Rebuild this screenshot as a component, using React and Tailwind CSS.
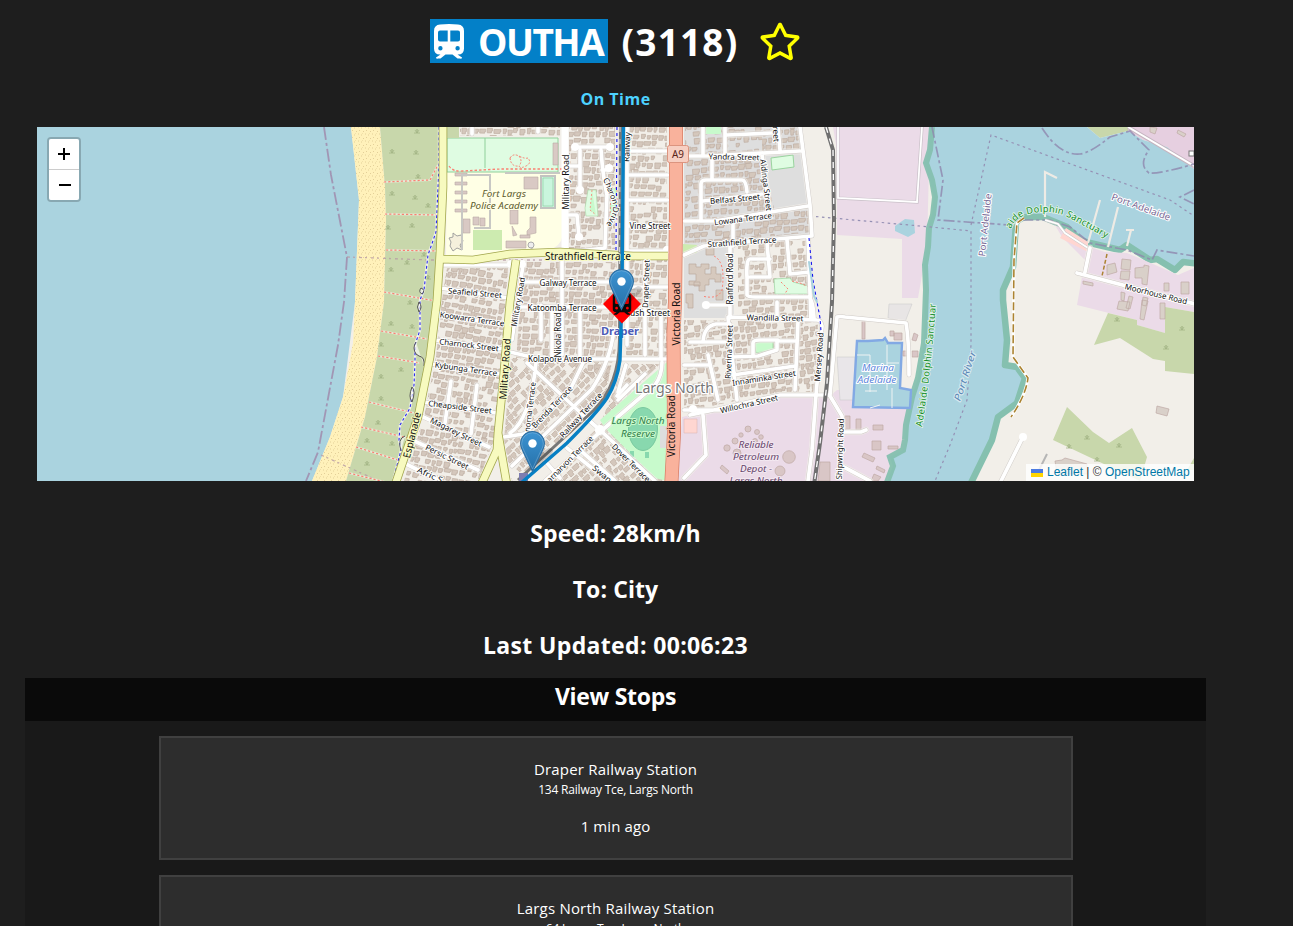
import React from "react";
import { FaRegStar } from "react-icons/fa";

/* ---------- map data (map units are page pixels) ---------- */

const HOUSE_REGIONS = [
  { id: "w", pts: "447,268 508,268 500,370 494,440 478,481 404,481 424,417 436,357 442,300", angle: 9, box: [390, 250, 140, 250] },
  { id: "n", pts: "460,127 560,127 560,136 460,136", angle: 1, box: [455, 122, 110, 24] },
  { id: "c", pts: "569,127 615,127 615,249 569,249", angle: 0, box: [565, 122, 55, 132] },
  { id: "m", pts: "524,262 617,262 617,345 606,385 560,358 516,358", angle: 2, box: [505, 255, 120, 140] },
  { id: "d", pts: "628,127 667,127 667,358 626,358", angle: 1, box: [620, 122, 52, 240] },
  { id: "s", pts: "511,358 612,358 606,395 560,440 530,468 512,481 504,440", angle: -45, box: [460, 330, 170, 170] },
  { id: "t", pts: "624,364 660,364 600,422 664,481 545,481 600,425", angle: -42, box: [520, 340, 170, 160] },
  { id: "e", pts: "685,127 762,127 762,160 775,212 810,208 810,232 735,241 685,243", angle: -4, box: [675, 115, 145, 140] },
  { id: "e2", pts: "762,130 800,127 800,150 762,155", angle: -3, box: [755, 120, 50, 40] },
  { id: "f", pts: "738,245 808,236 814,318 738,314", angle: -3, box: [730, 230, 90, 95] },
  { id: "g", pts: "684,320 818,322 816,392 780,392 720,404 684,412", angle: -7, box: [675, 305, 150, 115] },
];

function seeded(seed) {
  let s = seed;
  return () => {
    s = (s * 16807) % 2147483647;
    return s / 2147483647;
  };
}

function Houses({ region, index }) {
  const [x, y, w, h] = region.box;
  const rnd = seeded(991 + index * 137);
  const cx = x + w / 2;
  const cy = y + h / 2;
  const r = Math.hypot(w, h) / 2;
  const items = [];
  for (let v = -r; v < r; v += 7.2) {
    for (let u = -r; u < r; ) {
      const bw = 3 + rnd() * 4;
      const bh = 3.4 + rnd() * 2.4;
      if (rnd() > 0.1)
        items.push(`M${u.toFixed(1)} ${(v + rnd() * 2.2).toFixed(1)}h${bw.toFixed(1)}v${(bh * 0.6).toFixed(1)}h-1v${(bh * 0.4).toFixed(1)}h-${(bw - 1).toFixed(1)}z`);
      u += bw + 0.8 + rnd() * 1.8;
    }
  }
  return (
    <g clipPath={`url(#clip-${region.id})`}>
      <clipPath id={`clip-${region.id}`}>
        <polygon points={region.pts} />
      </clipPath>
      <path transform={`translate(${cx} ${cy}) rotate(${region.angle})`} d={items.join("")} fill="#d4c7bc" stroke="#bfafa3" strokeWidth="0.7" />
    </g>
  );
}

const STREETS = [
  // west
  "M443 265H510", "M440 288L509 298", "M438 315L507 325", "M435 340L503 349", "M431 364L500 374", "M424 402L496 413", "M421 416L489 447", "M412 440L478 470", "M404 463L440 481",
  "M451 381L445 423", "M477 385L471 434", "M504 437L530 433",
  // military / middle
  "M565 127V250", "M523 265L518 300L512 340", "M525 282H612", "M516 307H612", "M510 352L540 359H667", "M562 256V355", "M541 305V340", "M552 310V357", "M580 310V358",
  "M472 127V134", "M538 127V132",
  // charon drive
  "M575 147H610", "M580 150V190", "M601 150Q603 178 607 195", "M567 166H579", "M567 215H577L579 236", "M602 170H610", "M607 195L605 248L570 252", "M612 222L606 225",
  // draper
  "M627 127V345", "M627 151H668", "M627 175H668", "M627 200H668", "M627 226H668", "M627 251H668", "M645 260V355", "M627 312H668", "M661 312V357", "M627 287H668",
  // diagonal streets
  "M614 330Q610 362 592 389L512 466", "M662 362Q662 376 655 385L600 432L545 481", "M527 363L540 375L584 416L600 430L655 481", "M536 363Q530 420 510 433", "M584 361L570 390L528 430", "M567 448L608 481", "M545 461L560 478", "M627 385L617 396", "M645 374L618 400", "M626 365L618 392", "M580 450L615 481",
  // east north
  "M684 156H708L800 151", "M703 127V155", "M725 127V155", "M727 135L772 133", "M778 127L780 150", "M800 127L810 205L812 236", "M712 160V180", "M701 220V184Q701 180 706 180H742Q746 180 747 192", "M703 201L762 194", "M684 221H715L808 206", "M762 155L770 212", "M733 222V246", "M684 255L704 246L765 240L812 236",
  // ranford etc
  "M730 246V318", "M767 243L770 277H750", "M787 240L790 274L810 272", "M808 238L811 320", "M770 259H750Q746 259 747 278V295Q748 297 755 297H808Q813 297 814 318", "M705 305H728", "M728 317L817 320Q821 320 822 326L816 395", "M777 302V318", "M728 318L732 355L737 400",
  "M690 342H725", "M703 342Q704 326 716 324H730", "M708 355L718 400", "M684 365H708", "M732 357L758 356L777 350V341H796", "M753 355V343Q753 340 760 340H778", "M798 322L795 390", "M733 375L795 366", "M690 415L723 408L780 395H830", "M684 410H720",
  // south east
  "M816 395L812 450L808 481", "M703 415L706 455L684 478", "M830 396L842 416L843 432H861L866 430", "M840 465L870 481", "M830 395L837 317Q840 316 845 317L906 323Q909 340 909 375",
  "M1077 273L1195 304", "M1090 248L1085 272", "M1023 437L1001 481",
];

const YELLOW = ["M443 127V187L440 253L437 300L430 357L418 417L395 485", "M440 259L473 260L510 254L560 252L633 256H668", "M516 260L510 302L503 383L498 433L497 450L481 485", "M498 433L507 485"];

const RIVER = "M930 127L929 150L925 163L930 180L934 197L932 215L928 228L927 247L924 265L925 290L924 343L918 378L912 397L906 425L905 440L903 450L890 457L893 466L886 485H972L992 440L998 417L1017 403L1025 378L1017 367L1005 365L1007 340L1003 300L1003 290L1013 267L1016 223Q1020 217 1028 217L1043 217L1067 227L1080 240L1090 243L1120 250L1127 245L1150 260L1157 259L1175 270L1183 262L1200 264V174L1167 147L1143 140L1128 131L1100 138L1087 127Z";

/* text, x, y, length, rotation, size */
const LABELS = [
  ["Military Road", 566, 182, 55, -90, 9], ["Military Road", 505, 369, 61, -86, 10], ["Military Road", 518, 302, 50, -80, 8],
  ["Esplanade", 412, 435, 47, -76, 10], ["Strathfield Terrace", 588, 256, 86, 0, 10],
  ["Seafield Street", 475, 293, 54, 5, 8], ["Koowarra Terrace", 472, 319, 65, 8, 8], ["Charnock Street", 469, 345, 60, 7, 8], ["Kybunga Terrace", 466, 369, 63, 8, 8], ["Cheapside Street", 460, 407, 64, 7, 8], ["Magarey Street", 456, 432, 56, 26, 8], ["Persic Street", 447, 457, 47, 26, 8], ["Afric S", 430, 475, 27, 24, 8],
  ["Galway Terrace", 568, 283, 57, 0, 8], ["Katoomba Terrace", 562, 308, 69, 0, 8], ["Kolapore Avenue", 560, 359, 64, 0, 8], ["Nikola Road", 558, 335, 45, -90, 8],
  ["norna Terrace", 530, 407, 50, -83, 8], ["Brenda Terrace", 552, 407, 55, -46, 8], ["Railway Terrace", 581, 415, 58, -47, 8], ["arnarvon Terrace", 570, 459, 62, -45, 8], ["Dover Terrace", 631, 463, 50, 45, 8], ["Swan", 602, 474, 22, 40, 8],
  ["Vine Street", 650, 226, 41, 0, 8], ["Draper Street", 646, 284, 48, -88, 8], ["ush Street", 650, 313, 40, 0, 8], ["Railway", 627, 147, 30, -88, 8],
  ["Victoria Road", 676, 314, 63, -90, 10], ["Victoria Road", 671, 426, 62, -90, 10],
  ["Yandra Street", 734, 157, 51, 1, 8], ["Belfast Street", 735, 199, 50, -5, 8], ["Lowana Terrace", 743, 219, 58, -7, 8], ["Strathfield Terrace", 742, 242, 69, -4, 8], ["Aldinga Street", 766, 185, 52, 83, 8], ["reet", 776, 134, 16, 87, 8],
  ["Ranford Road", 730, 279, 51, -90, 8], ["Riverina Street", 729, 352, 54, -88, 8], ["Wandilla Street", 775, 318, 57, 1, 8], ["Innaminka Street", 764, 378, 64, -9, 8], ["Willochra Street", 749, 404, 59, -13, 8], ["Mersey Road", 819, 357, 49, -86, 8], ["Shipwright Road", 840, 449, 61, -88, 8], ["Moorhouse Road", 1156, 294, 64, 14, 8],
];

function Label({ t, x, y, len, rot = 0, size = 8, fill = "#111111", halo = "#ffffff", hw = 2, italic, weight }) {
  return (
    <text
      transform={`translate(${x} ${y}) rotate(${rot})`}
      dy={size * 0.35}
      textAnchor="middle"
      textLength={len}
      lengthAdjust="spacingAndGlyphs"
      fontSize={size}
      fontStyle={italic ? "italic" : undefined}
      fontWeight={weight}
      fill={fill}
      stroke={halo}
      strokeWidth={hw}
      strokeLinejoin="round"
      paintOrder="stroke"
    >
      {t}
    </text>
  );
}

function TrainIcon(props) {
  return (
    <svg viewBox="0 0 30 35" fill="currentColor" {...props}>
      <path
        fillRule="evenodd"
        d="M6 .5Q15-.5 24 .5Q30 1 30 7V24.500Q30 30.500 24 30.500H23.500L28 33.500Q28.200 34.800 26 34.600H23.500L18.500 30.500H11.500L6.500 34.600H4Q1.800 34.800 2 33.500L6.500 30.500H6Q0 30.500 0 24.500V7Q0 1 6 .5ZM6 6.500Q4 6.500 4 8.500V15.500Q4 17.500 6 17.500H13.700V6.500ZM16.300 6.500V17.500H24Q26 17.500 26 15.500V8.500Q26 6.500 24 6.500ZM6.400 22A2.200 2.200 0 1 0 6.400 26.400A2.200 2.200 0 1 0 6.400 22ZM23.600 22A2.200 2.200 0 1 0 23.600 26.400A2.200 2.200 0 1 0 23.600 22Z"
      />
    </svg>
  );
}

function Pin({ x, y }) {
  return (
    <g transform={`translate(${x - 12.5} ${y - 41})`}>
      <path d="M14 40L31 24Q36 18 29 17L20 22Z" fill="#000" opacity="0.16" />
      <path d="M12.5 40.5L3 20.5C1.4 17.4.6 15.4.6 12.5a11.9 11.9 0 0 1 23.8 0c0 2.900-.8 4.900-2.400 8Z" fill="url(#pinFill)" stroke="#2b6ea3" strokeWidth="1.1" />
      <path d="M12.5 37.800L4.200 20C2.600 16.900 1.700 15 1.700 12.500a10.800 10.800 0 0 1 21.600 0c0 2.500-.9 4.400-2.500 7.500Z" fill="none" stroke="#fff" strokeOpacity="0.2" />
      <circle cx="12.5" cy="12.5" r="4.200" fill="#fff" />
    </g>
  );
}

const TUFTS = [[417, 131], [392, 151], [416, 152], [418, 176], [392, 193], [415, 197], [428, 205], [412, 225], [388, 227], [424, 254], [407, 262], [391, 269], [428, 277], [410, 302], [391, 323], [412, 326], [381, 344], [401, 369], [381, 376], [381, 398], [378, 422], [367, 440], [392, 443], [367, 463], [1117, 319], [1182, 328], [1166, 347], [1087, 437], [1119, 445], [1097, 459], [1069, 446]];

const COAST_PATH = "M439 127V165L436 232L428 255L424 290L420 300V330L415 345V362L414 385L410 408L400 425L399 440L401 450L393 481";
const BEACH_TRACKS = "M384 182L430 180L438 165M385 214L437 215M386 250L438 251M384 292L436 301M381 331L427 339M378 356L420 363M369 402L418 414M361 427L408 438M356 447L404 462M349 473L397 485";

function MapDrawing() {
  return (
    <svg viewBox="37 127 1157 354" className="block h-[354px] w-[1157px] font-['Noto_Sans',sans-serif]" aria-hidden="true">
      <defs>
        <linearGradient id="pinFill" x1="0" y1="0" x2="0" y2="1">
          <stop offset="0" stopColor="#3c93d2" />
          <stop offset="1" stopColor="#2570a8" />
        </linearGradient>
        <pattern id="sand" width="7" height="7" patternUnits="userSpaceOnUse">
          <path d="M1 1h1M4 2h1M2 4.500h1M6 5.500h1M5 0h1" stroke="#dcc78f" strokeWidth="0.8" />
        </pattern>
      </defs>
      <rect x="37" y="127" width="1157" height="354" fill="#f2efe9" />

      {/* gulf, beach and dunes */}
      <path d="M37 127H351L359 200L355 302L343 397L330 437L312 481H37Z" fill="#aad3df" />
      <path d="M351 127H380L385 187L386 220L384 302L377 357L365 417L346 481H312L330 437L343 397L353 343L355 302L359 200Z" fill="#fff1ba" />
      <path d="M351 127H380L385 187L386 220L384 302L377 357L365 417L346 481H312L330 437L343 397L353 343L355 302L359 200Z" fill="url(#sand)" />
      <path d="M380 127H443V187L440 253L437 300L430 357L418 417L397 481H346L365 417L377 357L384 302L386 220L385 187Z" fill="#c8d7ab" />
      <path d="M324 127L331 175L347 257L344 302L338 345L318 452L306 481" fill="none" stroke="#a08bad" strokeWidth="1.8" strokeDasharray="13 3 3 3" opacity=".85" />
      <path d="M347 257L430 260H545M321 455L350 468L372 478" fill="none" stroke="#b79aa5" strokeWidth="1.300" strokeDasharray="3 3 2 4" opacity=".8" />
      <path d={BEACH_TRACKS} fill="none" stroke="#fff" strokeWidth="2" opacity=".5" />
      <path d={BEACH_TRACKS} fill="none" stroke="#fa8072" strokeWidth="1.200" strokeDasharray="2.200 2" />
      <path d={COAST_PATH} fill="none" stroke="#fff" strokeWidth="2.400" opacity=".7" />
      <path d={COAST_PATH} fill="none" stroke="#1414ee" strokeWidth="1.100" strokeDasharray="2.800 2.400" opacity=".9" />
      <path d="M421 288q5 2 1 6q-4-2-1-6M419 302q4 5 0 10q-3-5 0-10M416 342q-4 6 0 12l3 2q6 1 5 10M412 387q4 4 0 15q-4-5 0-15M405 436q-8 3-4 15" fill="#fff" fillOpacity=".6" stroke="#555" strokeWidth="1" />

      {/* police academy and parks */}
      <path d="M447 172H563V235Q560 248 548 250L510 253L475 258L446 257Z" fill="#ffffe5" />
      <path d="M447 138H558V172H447Z" fill="#dffce2" stroke="#8fd09a" strokeWidth="1" />
      <path d="M447 127H459V138H447Z" fill="#c8d7ab" />
      <path d="M485 138V168" stroke="#8fd09a" />
      <path d="M449 166Q453 172 463 171L500 169H565" fill="none" stroke="#fa8072" strokeWidth="1.300" strokeDasharray="2.500 2" />
      <path d="M510 158q3-5 9-2t9 2q4 5-2 8t-7 0q-8 1-9-8M519 156q4 5 0 10" fill="none" stroke="#fa8072" strokeDasharray="2 1.500" />
      <path d="M541 176H555V208H541Z" fill="#c9f5dd" stroke="#c2c4c0" strokeWidth="2" />
      <path d="M543 178H553V206H543Z" fill="none" stroke="#8fd0a5" strokeWidth=".7" />
      <path d="M473 230H502V250H473Z" fill="#cdebb0" />
      <g fill="#d9c9c4" stroke="#b9a9a4" strokeWidth=".6">
        <path d="M455 173h12v3h-12zM455 182h12v3h-12zM455 191h12v3h-12zM455 200h12v3h-12zM455 209h12v3h-12zM463 219h7v14h-7zM473 217h6v8h-6zM480 218h5v8h-5zM510 210h8v14h-8zM530 217h6v16l-9 2v-4l3-3zM512 226l5 9-4 1zM520 235h10v3h-10zM506 241h20v7h-20zM524 177h14v12h-14zM553 143h5v22h-5z" />
      </g>
      <path d="M453 233l4 3 4-1 2 6-3 4 2 5-5-2-4 3-3-5 1-4-2-4 4-1z" fill="#f5f0dc" stroke="#999" strokeWidth=".9" />
      <path d="M462 182V175H490V228H474M462 182V250M530 243l2 6M505 173H560" fill="none" stroke="#c8c8c4" strokeWidth="2" />
      <circle cx="531" cy="245" r="3" fill="#eee" stroke="#aaa" />

      {/* residential ground in the east */}
      <path d="M684 127H802L812 235L734 246V318H684Z" fill="#dedede" />
      <path d="M833 127H930L927 247L918 298H902V239L837 235V150Z" fill="#ebdbe8" />
      <path d="M838 127V198L917 202L922 127" fill="none" stroke="#c9c0c8" strokeWidth="3.200" />
      <path d="M838 127V198L917 202L922 127" fill="none" stroke="#fff" strokeWidth="1.800" />
      <path d="M895 226L905 219L914 220L915 233L908 237L895 231Z" fill="#aad3df" />
      <path d="M682 417L723 407L780 396H830L837 390L913 389L904 450L890 460L887 485H676Z" fill="#ebdbe8" />
      <path d="M837 357H855V400H840Z" fill="#e9e6e9" stroke="#ccc" strokeWidth=".6" />
      <path d="M889 304H912L905 322L888 318Z" fill="#e8e5e5" stroke="#ccc" strokeWidth=".6" />

      {/* river */}
      <path d="M1087 127L1100 138L1128 131V127Z" fill="#c8d7ab" />
      <path d="M1128 127V131L1143 140L1167 147L1195 170V127Z" fill="#e6cfe0" />
      <path d={RIVER} fill="#aad3df" />
      <path d="M932 127L930 150L926 163L932 180L935 197L933 215L929 228L928 247L925 265L926 290L924 343L918 378L912 397L906 425L905 440L903 450L890 457L893 466L886 485" fill="none" stroke="#85c0af" strokeWidth="6" opacity=".95" />
      <path d="M970 485L992 440L998 417L1017 403L1025 378L1017 367L1005 365L1007 340L1003 300V290L1013 267L1016 223Q1020 217 1028 217L1043 217L1067 227L1080 240L1090 243L1120 250L1127 245L1150 260L1157 259L1175 270L1183 262L1200 264" fill="none" stroke="#85c0af" strokeWidth="6.500" strokeLinejoin="round" />
      <path d="M1128 127L1194 166" stroke="#c5b5c0" strokeWidth="4" />
      <path d="M1128 127L1194 166" stroke="#fff" strokeWidth="2" />
      <path d="M1042 128Q1060 156 1080 154Q1090 153 1110 137L1130 131L1149 150Q1138 165 1149 173Q1160 174 1194 164M932 127L943 180L938 220L1010 225L1020 220H1050L1070 227L1090 243L1127 250L1152 260L1157 250L1194 256M1194 190L1180 197L1194 204" fill="none" stroke="#8e87ae" strokeWidth="1.700" strokeDasharray="11 3 3 3" opacity=".8" />
      <path d="M971 225L991 135L1170 200L1194 216M810 216L920 226L971 231V345L967 400L950 445L935 481" fill="none" stroke="#9590b4" strokeWidth="1.200" strokeDasharray="2.500 3.500" />
      <path d="M1045 217V172L1057 178M1088 243L1100 200M1108 247L1118 207M1127 246L1131 230M1126 230H1134" fill="none" stroke="#eeebe5" strokeWidth="2.200" />
      <path d="M1024 218L1017 223L1014 260L1013 357L1028 378Q1026 395 1011 417" fill="none" stroke="#fff" strokeWidth="3" />
      <path d="M1024 218L1017 223L1014 260L1013 357L1028 378Q1026 395 1011 417" fill="none" stroke="#ac8331" strokeWidth="1.600" strokeDasharray="8 3" />

      {/* eastern peninsula */}
      <path d="M1055 225L1090 247L1105 252L1127 253L1153 264L1178 275L1194 268V312L1165 307V333L1137 325V320L1077 305L1085 260L1062 237Z" fill="#ebdbe8" />
      <path d="M1066 228L1088 242V252L1060 238Z" fill="#ffd6d1" />
      <path d="M1108 313L1094 345L1120 338L1153 359L1165 361V371L1194 374V312L1165 307V333L1137 325V320Z" fill="#c8d7ab" />
      <path d="M1067 407L1053 440L1140 481L1147 457L1132 428L1109 443L1093 432ZM1187 470l7-12v12z" fill="#c8d7ab" />
      <path d="M1045 220L1058 224L1065 233L1088 248" fill="none" stroke="#ccc" strokeWidth="3" />
      <path d="M1045 220L1058 224L1065 233L1088 248" fill="none" stroke="#fff" strokeWidth="1.800" />
      <path d="M1107 254L1102 276" stroke="#ac8331" strokeWidth="1.500" strokeDasharray="4 2" />
      <g fill="#d9d0c9" stroke="#bfa9a5" strokeWidth=".7">
        <path d="M1107 265l8-2 2 9-10 3zM1122 259l9 1-1 10-9-1zM1121 271h9l-1 9-9-1zM1135 268l9-1v-2l5 1-2 19-5-1v-6h-7zM1121 292l4 1-1 8-3-1zM1129 296l4 1-3 12-4-1zM1143 297l5 1-2 8-4-1zM1164 283h5v8h-5zM1181 282h8v12h-8zM1119 301l11 1-2 9-11-2zM1142 300l6 1-4 19-4-1zM1160 303h5v16h-5zM1083 281l10 2v3l-10-2zM1157 406l12 3-2 7-11-3zM1055 461l7-1 3-2 22 6v10h-30zM1178 130l8 4-2 3-7-4zM1150 127l7 1-2 6-5-2z" />
      </g>
      <path d="M1047 454L1039 470" stroke="#b5b5b5" strokeWidth="2" />
      <rect x="1189" y="151" width="5" height="5" fill="#fff" stroke="#777" />

      {/* marina and industrial details */}
      <path d="M857 341H868L883 340L885 338L888 343H902L900 388L911 390L910 408L853 407Z" fill="#aad3df" stroke="#82a9e4" strokeWidth="2.400" />
      <path d="M870 355V392M870 355H857M887 345V390M887 363H899M892 388V408M865 391H877M870 408l10-3" fill="none" stroke="#eef3f3" strokeWidth="1" />
      <g fill="#d9c6c6" stroke="#bfa9a5" strokeWidth=".7">
        <circle cx="789" cy="457" r="6.300" /><circle cx="780" cy="471" r="5" /><circle cx="748" cy="429" r="3" /><circle cx="741" cy="435" r="2.200" /><circle cx="735" cy="441" r="3" /><circle cx="727" cy="448" r="3.200" /><circle cx="757" cy="432" r="2.500" /><circle cx="761" cy="437" r="2.300" /><circle cx="755" cy="441" r="2.500" /><circle cx="737" cy="453" r="4" />
        <path d="M845 416h5v13h-5zM856 419h5v11h-5zM873 425h10v5h-10zM872 441h9v9h-9zM888 446h10v3h-10zM864 453l11 5-2 4-11-5zM820 462h10v19h-12zM877 466l8 4-1 3-8-4zM722 465l7 6-2 3-7-6zM894 333h8v7h-8zM890 331h4v5h-4zM862 321h3v18h-3zM914 333l4 2-2 6-4-1zM903 351h5v5h-5zM912 351h6v6h-6zM874 474l7 3-3 4h-7z" />
      </g>

      {/* buildings */}
      {HOUSE_REGIONS.map((r, i) => <Houses key={r.id} region={r} index={i} />)}
      <path d="M690 258l10-4 14 3 3 18 9 3v18l-12 3-8-9-14-2z" fill="#dedede" />
      <path d="M689 264h7v3h5v-3h8v5h-4v5h6v-7h5v7h5v8h-6v-3h-6v6h-4v6h-6v-6h-10v-4h7v-7h-7zM706 247h8v8h-8zM686 294h7v14h-5v-5h-2zM716 290h7v10h-7zM694 282h6v4h-6z" fill="#d6c9be" stroke="#bcaa9d" strokeWidth=".7" />
      <path d="M714 256Q726 262 722 290Q718 300 702 296" fill="none" stroke="#fa8072" strokeDasharray="2 2" />

      {/* parks */}
      <path d="M667 362V481L655 478L605 428L600 420Z" fill="#c8facc" />
      <ellipse cx="643" cy="429" rx="14.500" ry="21.500" fill="#88d8ae" stroke="#79c99f" />
      <path d="M630 451h4v6h-4zM645 452h4v6h-4z" fill="#88d8ae" />
      <path d="M660 426h7v22h-7z" fill="#ddd" />
      <path d="M588 190H596L598 216H586L585 208Z" fill="#dffce2" stroke="#a8d5a5" strokeWidth=".6" />
      <path d="M592 190l-2 20 6 5M611 188h6v32h-7z" fill="#c8facc" stroke="#fa8072" strokeWidth=".8" strokeDasharray="2 2" />
      <path d="M771 158L793 155L794 167L772 170Z" fill="#dffce2" stroke="#9ad49f" />
      <path d="M774 279L790 278L793 282L812 287V294H775Z" fill="#dffce2" stroke="#9ad49f" strokeWidth=".7" />
      <path d="M781 282l7 7-4 6M792 281l8 2 9 4v8" fill="none" stroke="#fa8072" strokeDasharray="2 2" />
      <path d="M754 342L773 340V350L756 353Z" fill="#c8facc" stroke="#a6d8a8" />
      <path d="M706 127H721V134H705Z" fill="#c8facc" />
      <path d="M683 244L697 245V253L683 254Z" fill="#cdebb0" />
      <path d="M684 419H697V433H684Z" fill="#ffd6d1" stroke="#ddb9b5" strokeWidth=".6" />

      {/* streets */}
      <g fill="none" strokeLinecap="round" strokeLinejoin="round">
        <path d={STREETS.join("")} stroke="#f2efe9" strokeWidth="6.600" opacity=".6" />
        <path d={STREETS.join("")} stroke="#cfcac6" strokeWidth="4.600" />
        <path d={STREETS.join("")} stroke="#ffffff" strokeWidth="3.700" />
        <path d="M565 127V250" stroke="#fff" strokeWidth="7" />
        <g fill="#fff" stroke="none">
          <circle cx="575" cy="147" r="4" /><circle cx="610" cy="147" r="4" /><circle cx="580" cy="190" r="4" /><circle cx="579" cy="237" r="4" /><circle cx="609" cy="168" r="4" /><circle cx="667" cy="250" r="4" /><circle cx="600" cy="430" r="5" /><circle cx="1023" cy="437" r="4" /><circle cx="511" cy="264" r="4" /><circle cx="522" cy="264" r="4" /><circle cx="706" cy="305" r="4" /><circle cx="693" cy="409" r="4" />
        </g>
        <path d={YELLOW.join("")} stroke="#a3a74e" strokeWidth="8.600" strokeLinecap="butt" />
        <path d={YELLOW.join("")} stroke="#f7fabf" strokeWidth="7" strokeLinecap="butt" />
        <path d="M676 120V210L675 302L673.500 333L674 433L671 490" stroke="#d77b63" strokeWidth="14" />
        <path d="M676 120V210L675 302L673.500 333L674 433L671 490" stroke="#f9b29c" strokeWidth="12.600" />
        <path d="M617 127L616 250M809 238L813 280L820 318L822 345" stroke="#1414ee" strokeWidth="1.100" strokeDasharray="3 3" strokeLinecap="butt" />
        <path d="M809 262L814 296L817 302" stroke="#aad3df" strokeWidth="2" />
        <path d="M826 127L833 150L834 220L832 302L827 383L820 443L814 485" stroke="#707070" strokeWidth="4" strokeLinecap="butt" />
        <path d="M826 127L833 150L834 220L832 302L827 383L820 443L814 485" stroke="#fff" strokeWidth="1.300" strokeDasharray="6 6" strokeLinecap="butt" />
        <path d="M620.500 127L619.500 340Q619 385 594 410L518 480" stroke="#777" strokeWidth="3" strokeLinecap="butt" />
        <path d="M620 127L619.500 300" stroke="#ddd" strokeWidth="1" strokeDasharray="5 7" strokeLinecap="butt" />
      </g>
      <rect x="519" y="473" width="9" height="8" fill="#7d7db0" />

      {TUFTS.map(([x, y]) => (
        <path key={`${x}-${y}`} d={`M${x - 3} ${y + 2}h6M${x - 2} ${y - 1}l2 3v-4v4l2-3`} fill="none" stroke="#a3b585" strokeWidth=".8" />
      ))}

      {/* labels */}
      {LABELS.map(([t, x, y, len, rot, size], i) => (
        <Label key={i} t={t} x={x} y={y} len={len} rot={rot} size={size} halo={t === "Victoria Road" ? "#f9b29c" : size === 10 ? "#f7fabf" : "#ffffff"} />
      ))}
      <path id="charon" d="M603 179Q610 195 613 205Q614 215 605 226" fill="none" />
      <text fontSize="8" fill="#111" stroke="#fff" strokeWidth="1.800" paintOrder="stroke"><textPath href="#charon" textLength="49">Charon Drive</textPath></text>
      <Label t="Fort Largs" x={504} y={194} len={44} size={9.300} italic fill="#5c5a2c" halo="#ffffe5" />
      <Label t="Police Academy" x={504} y={206} len={68} size={9.300} italic fill="#5c5a2c" halo="#ffffe5" />
      <Label t="Draper" x={620} y={331} len={38} size={10.500} weight="700" fill="#4d5ab5" />
      <Label t="Largs North" x={638} y={421} len={53} size={9.300} italic fill="#2f7a48" halo="#c8facc" />
      <Label t="Reserve" x={638} y={434} len={34} size={9.300} italic fill="#2f7a48" halo="#c8facc" />
      <Label t="Largs North" x={674.500} y={388} len={79} size={13.500} fill="#777" hw={2.400} />
      <Label t="Marina" x={878} y={368} len={32} size={9.300} italic fill="#5b86dc" />
      <Label t="Adelaide" x={877} y={380} len={39} size={9.300} italic fill="#5b86dc" />
      <Label t="Reliable" x={756} y={445} len={35} size={9.300} italic fill="#66456b" halo="#f3e8f1" />
      <Label t="Petroleum" x={756} y={457} len={46} size={9.300} italic fill="#66456b" halo="#f3e8f1" />
      <Label t="Depot -" x={756} y={469} len={32} size={9.300} italic fill="#66456b" halo="#f3e8f1" />
      <Label t="Largs North" x={756} y={480.500} len={53} size={9.300} italic fill="#66456b" halo="#f3e8f1" />
      <Label t="Port Adelaide" x={985} y={225} len={63} rot={-84} size={9.300} fill="#796a96" />
      <Label t="Port Adelaide" x={1141} y={207} len={62} rot={20} size={9.300} fill="#796a96" />
      <Label t="Port River" x={965} y={376} len={52} rot={-72} size={9.300} italic fill="#5a86b5" halo="#d6e9ef" />
      <path id="sanctuary" d="M1011 229Q1015 217 1029 214Q1048 209 1066 216L1108 239" fill="none" />
      <text fontSize="9.300" fill="#118c2b" stroke="#e4f5e8" strokeWidth="1.600" paintOrder="stroke"><textPath href="#sanctuary" textLength="108">aide Dolphin Sanctuary</textPath></text>
      <path id="sanctuary2" d="M922 427Q932 365 936 302" fill="none" />
      <text fontSize="9.300" fill="#118c2b" stroke="#e4f5e8" strokeWidth="1.600" paintOrder="stroke"><textPath href="#sanctuary2" textLength="124">Adelaide Dolphin Sanctuar</textPath></text>
      <rect x="667.500" y="145.500" width="21" height="17" rx="2" fill="#f7cfc2" stroke="#dc947f" />
      <Label t="A9" x={678} y={154.500} len={12} size={10} halo="none" fill="#5a2418" />

      {/* route and markers */}
      <path d="M623.500 127L622 290L621 327L620 360Q617 382 607 398Q597 413 567 443L520 484" fill="none" stroke="#0780c4" strokeWidth="3.400" />
      <path d="M622 284.500L641 304L622 323.500L603 304Z" fill="#ff0000" />
      <TrainIcon x={612.500} y={293} width={19} height={22} color="#0a0a0a" />
      <Pin x={621.500} y={310} />
      <Pin x={532.500} y={472} />
    </svg>
  );
}

function TransitMap() {
  return (
    <div className="relative mx-[37px] mt-[16px] h-[354px] overflow-hidden bg-[#aad3df]">
      <MapDrawing />
      <div className="absolute top-[10px] left-[10px] flex w-[34px] flex-col rounded-[4px] border-2 border-black/20 bg-clip-padding text-black">
        <button className="flex h-[31px] items-center justify-center rounded-t-[2px] border-b border-[#ccc] bg-white" aria-label="Zoom in">
          <svg viewBox="0 0 12 12" className="h-3 w-3"><path d="M0 6h12M6 0v12" stroke="#000" strokeWidth="2" /></svg>
        </button>
        <button className="flex h-[30px] items-center justify-center rounded-b-[2px] bg-white pl-px" aria-label="Zoom out">
          <svg viewBox="0 0 12 12" className="h-3 w-3"><path d="M0 6h12" stroke="#000" strokeWidth="2" /></svg>
        </button>
      </div>
      <div className="absolute right-0 bottom-0 flex h-[17px] w-[168px] items-center bg-white/80 pl-[5px] font-['Liberation_Sans',sans-serif] text-[12px] leading-[17px] whitespace-pre text-[#333]">
        <svg viewBox="0 0 12 8" className="mr-[4px] h-2 w-3"><path d="M0 0h12v4H0z" fill="#4c7be1" /><path d="M0 4h12v4H0z" fill="#ffd500" /></svg>
        <span className="text-[#0078a8]">Leaflet</span><span> | © </span><span className="text-[#0078a8]">OpenStreetMap</span>
      </div>
    </div>
  );
}

const STOPS = [
  { name: "Draper Railway Station", address: "134 Railway Tce, Largs North", when: "1 min ago" },
  { name: "Largs North Railway Station", address: "64 Jersey Tce, Largs North", when: "3 min" },
];

export default function App() {
  return (
    <div className="h-[926px] overflow-hidden bg-[#1e1e1e] font-['Open_Sans','Noto_Sans',sans-serif] text-white">
      <main className="w-[1231px] text-center">
        <h1 className="flex h-[82px] items-center justify-center text-[37px] leading-[44px] font-bold whitespace-nowrap">
          <span className="flex h-[44px] w-[178px] items-center bg-[#0380c8] pl-[4px]">
            <TrainIcon className="h-[35px] w-[30px] shrink-0" />
            <span className="ml-[14px] pt-px tracking-[-1.500px]">OUTHA</span>
          </span>
          <span className="ml-[13px] w-[118px] pt-px tracking-[1.200px]">(3118)</span>
          <FaRegStar className="ml-[20px] h-[39px] w-[42px] text-[#ffff00]" />
        </h1>
        <p className="mt-[5px] h-[24px] text-[16px] leading-[24px] font-bold tracking-[0.5px] text-[#4dd2ff]">On Time</p>
        <TransitMap />
        <div className="flex flex-col gap-7 pt-[38px] text-[23px] leading-[28px] font-bold">
          <h2 className="tracking-[0.1px]">Speed: 28km/h</h2>
          <h2 className="tracking-[0.1px]">To: City</h2>
          <h2 className="tracking-[0.35px]">Last Updated: 00:06:23</h2>
        </div>
        <section className="mx-[25px] mt-[19px] bg-[#191919]">
          <h2 className="h-[43px] bg-[#0a0a0a] pt-[4px] text-[23px] leading-[28px] font-bold tracking-[-0.3px]">View Stops</h2>
          <div className="flex flex-col items-center gap-[15px] pt-[15px]">
            {STOPS.map((s) => (
              <article key={s.name} className="h-[124px] w-[914px] border-2 border-[#404040] bg-[#2d2d2d] pt-[21px] font-medium">
                <div className="text-[15px] leading-[20px] tracking-[0.2px]">{s.name}</div>
                <div className="mt-px text-[12px] leading-[20px] tracking-[-0.2px]">{s.address}</div>
                <div className="mt-[16px] text-[15px] leading-[20px] tracking-[0.1px]">{s.when}</div>
              </article>
            ))}
          </div>
        </section>
      </main>
    </div>
  );
}
